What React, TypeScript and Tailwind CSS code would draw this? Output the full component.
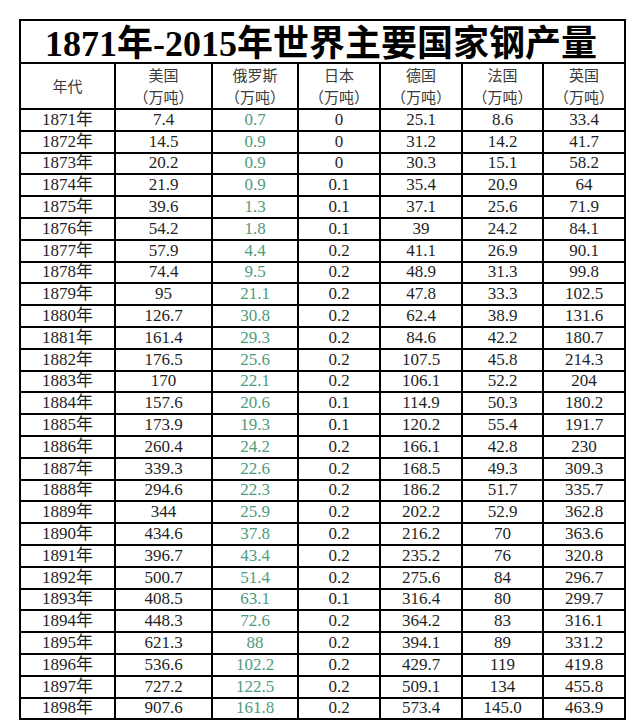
import React from 'react';

const rows: string[][] = [
  ['1871', '7.4', '0.7', '0', '25.1', '8.6', '33.4'],
  ['1872', '14.5', '0.9', '0', '31.2', '14.2', '41.7'],
  ['1873', '20.2', '0.9', '0', '30.3', '15.1', '58.2'],
  ['1874', '21.9', '0.9', '0.1', '35.4', '20.9', '64'],
  ['1875', '39.6', '1.3', '0.1', '37.1', '25.6', '71.9'],
  ['1876', '54.2', '1.8', '0.1', '39', '24.2', '84.1'],
  ['1877', '57.9', '4.4', '0.2', '41.1', '26.9', '90.1'],
  ['1878', '74.4', '9.5', '0.2', '48.9', '31.3', '99.8'],
  ['1879', '95', '21.1', '0.2', '47.8', '33.3', '102.5'],
  ['1880', '126.7', '30.8', '0.2', '62.4', '38.9', '131.6'],
  ['1881', '161.4', '29.3', '0.2', '84.6', '42.2', '180.7'],
  ['1882', '176.5', '25.6', '0.2', '107.5', '45.8', '214.3'],
  ['1883', '170', '22.1', '0.2', '106.1', '52.2', '204'],
  ['1884', '157.6', '20.6', '0.1', '114.9', '50.3', '180.2'],
  ['1885', '173.9', '19.3', '0.1', '120.2', '55.4', '191.7'],
  ['1886', '260.4', '24.2', '0.2', '166.1', '42.8', '230'],
  ['1887', '339.3', '22.6', '0.2', '168.5', '49.3', '309.3'],
  ['1888', '294.6', '22.3', '0.2', '186.2', '51.7', '335.7'],
  ['1889', '344', '25.9', '0.2', '202.2', '52.9', '362.8'],
  ['1890', '434.6', '37.8', '0.2', '216.2', '70', '363.6'],
  ['1891', '396.7', '43.4', '0.2', '235.2', '76', '320.8'],
  ['1892', '500.7', '51.4', '0.2', '275.6', '84', '296.7'],
  ['1893', '408.5', '63.1', '0.1', '316.4', '80', '299.7'],
  ['1894', '448.3', '72.6', '0.2', '364.2', '83', '316.1'],
  ['1895', '621.3', '88', '0.2', '394.1', '89', '331.2'],
  ['1896', '536.6', '102.2', '0.2', '429.7', '119', '419.8'],
  ['1897', '727.2', '122.5', '0.2', '509.1', '134', '455.8'],
  ['1898', '907.6', '161.8', '0.2', '573.4', '145.0', '463.9'],
];

const countries = ['美国', '俄罗斯', '日本', '德国', '法国', '英国'];
const widths = ['w-[95px]', 'w-[97px]', 'w-[86px]', 'w-[82px]', 'w-[82px]', 'w-[81px]', 'w-[82px]'];

const serif = { fontFamily: '"Liberation Serif", "Noto Sans CJK SC", serif' };
const cjk = { fontFamily: '"Noto Sans CJK SC", sans-serif' };

// full-width parens, kept a full em wide
function Unit() {
  return (
    <div className="flex justify-center">
      <span className="inline-block w-[15px] text-right">（</span>
      <span>万吨</span>
      <span className="inline-block w-[15px] text-left">）</span>
    </div>
  );
}

export default function App() {
  return (
    <div className="min-h-[720px] bg-white pt-[19px] pl-[19px]" style={serif}>
      <table className="table-fixed border-collapse w-[605px] text-[17px] text-[#1f1f1f]">
        <colgroup>
          {widths.map((w, i) => (
            <col key={i} className={w} />
          ))}
        </colgroup>
        <thead>
          <tr className="h-[43px]">
            <th
              colSpan={7}
              className="border-2 border-black text-[36px] font-bold leading-none text-black text-left pl-[24px] pt-[4px]"
            >
              1871年-2015年世界主要国家钢产量
            </th>
          </tr>
          <tr className="h-[45px]" style={cjk}>
            <th className="border-2 border-black font-normal text-[15px] text-[#3a3a3a] leading-[22px] p-0">年代</th>
            {countries.map((c) => (
              <th key={c} className="border-2 border-black font-normal text-[15px] text-[#3a3a3a] leading-[22px] p-0">
                <div>{c}</div>
                <Unit />
              </th>
            ))}
          </tr>
        </thead>
        <tbody>
          {rows.map((r) => (
            <tr key={r[0]} className="h-[21.8px]">
              <td className="border-2 border-black text-center leading-[18px] p-0">{r[0]}年</td>
              {r.slice(1).map((v, i) => (
                <td
                  key={i}
                  className={
                    'border-2 border-black text-center leading-[18px] p-0 ' +
                    (i === 1 ? 'text-[#4e9c7c]' : '')
                  }
                >
                  {v}
                </td>
              ))}
            </tr>
          ))}
        </tbody>
      </table>
    </div>
  );
}
